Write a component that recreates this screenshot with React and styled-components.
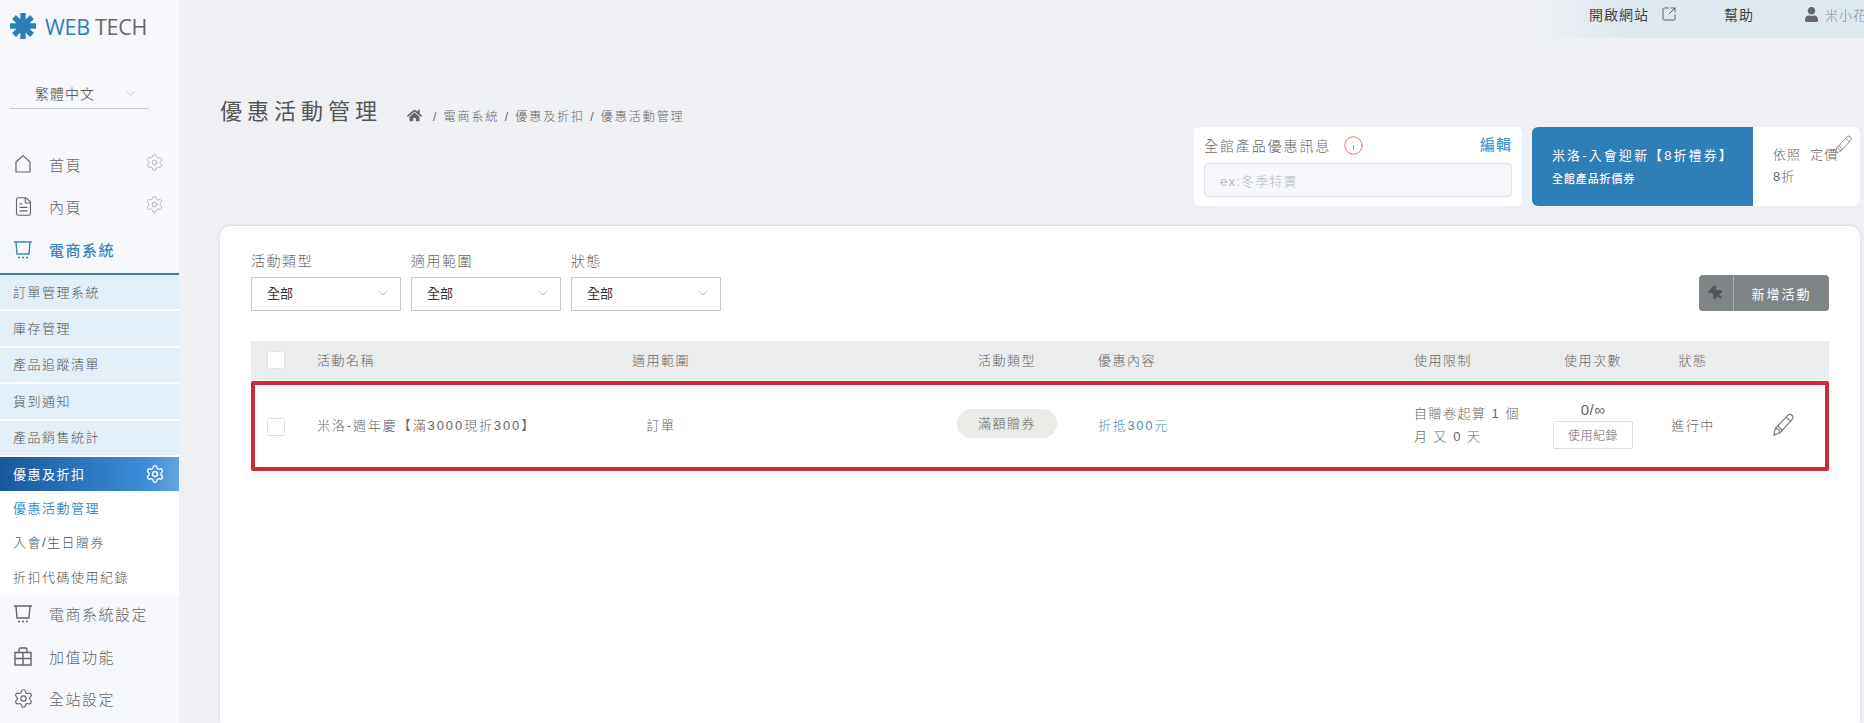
import React from "react";
import styled, { createGlobalStyle } from "styled-components";
import { ChevronDown, FileText, Info, Settings, SquareArrowOutUpRight } from "lucide-react";
import { FaHome, FaThumbtack, FaUser } from "react-icons/fa";

const FONT = `"Liberation Sans", "Noto Sans CJK TC", sans-serif`;

const GlobalStyle = createGlobalStyle`
  html, body {
    margin: 0;
    height: 100%;
    overflow: hidden;
    background: #eef0f4;
    font-family: ${FONT};
    font-weight: 300;
    color: #555;
  }
  * {
    box-sizing: border-box;
  }
`;

function LogoMark() {
  return (
    <svg width="26" height="26" viewBox="0 0 26 26" stroke="#2e7eb8" strokeWidth="5.4">
      <path d="M13 0v26M0 13h26M4 4l18 18M22 4 4 22" />
      <circle cx="13" cy="13" r="5" fill="#2e7eb8" stroke="none" />
    </svg>
  );
}

function HouseIcon() {
  return (
    <svg width="20" height="20" viewBox="0 0 20 20" fill="none" stroke="currentColor" strokeWidth="1.2">
      <path d="M3 8 10 1.5 17 8v10H3z" />
    </svg>
  );
}

function CartIcon() {
  return (
    <svg width="20" height="20" viewBox="0 0 20 20" fill="none" stroke="currentColor" strokeWidth="1.4">
      <path d="M1 2h18M3 2l1 12h12l1-12" />
      <path d="M5 17.5h2M9 17.5h2M13 17.5h2" />
    </svg>
  );
}

function GiftIcon() {
  return (
    <svg width="20" height="20" viewBox="0 0 20 20" fill="none" stroke="currentColor" strokeWidth="1.4">
      <path d="M2 6.5h16v12.5H2zM2 12.5h16M10 6.5v12.500" />
      <path d="M6 6.5V3.500Q6 2 7.500 2h5Q14 2 14 3.500v3" />
    </svg>
  );
}

function PencilIcon({ size }) {
  return (
    <svg width={size} height={size} viewBox="0 0 24 24" fill="none" stroke="currentColor" strokeWidth="1.2">
      <path d="M2 23l1.500-7L16.500 2.500a3 3 0 0 1 4.500 4.200L8.500 20.500z" />
      <path d="M3.500 16c2 0 4.500 2 5 4.500M6 13.500l5 5M15 4.500l5 4.500" />
    </svg>
  );
}

const subItems = ["訂單管理系統", "庫存管理", "產品追蹤清單", "貨到通知", "產品銷售統計"];
const innerItems = ["優惠活動管理", "入會/生日贈券", "折扣代碼使用紀錄"];
const filters = ["活動類型", "適用範圍", "狀態"];

export default function App() {
  return (
    <Page>
      <GlobalStyle />
      <Sidebar>
        <Logo>
          <LogoMark />
          <LogoText>
            WEB <LogoGrey>TECH</LogoGrey>
          </LogoText>
        </Logo>
        <LangSelect>
          繁體中文
          <LangArrow>
            <ChevronDown size={15} strokeWidth={1} />
          </LangArrow>
        </LangSelect>
        <NavItem $height={42}>
          <NavIcon><HouseIcon /></NavIcon>
          首頁
          <NavGear><Settings size={19} strokeWidth={1.1} /></NavGear>
        </NavItem>
        <NavItem $height={42}>
          <NavIcon><FileText size={21} strokeWidth={1.3} /></NavIcon>
          內頁
          <NavGear><Settings size={19} strokeWidth={1.1} /></NavGear>
        </NavItem>
        <NavItem $height={47} $current>
          <NavIcon><CartIcon /></NavIcon>
          電商系統
        </NavItem>
        <SubList>
          {subItems.map((item) => (
            <SubItem key={item}>{item}</SubItem>
          ))}
          <ActiveItem>
            優惠及折扣
            <Settings size={20} strokeWidth={1.6} />
          </ActiveItem>
        </SubList>
        <InnerList>
          {innerItems.map((item, index) => (
            <InnerItem key={item} $selected={index === 0}>{item}</InnerItem>
          ))}
        </InnerList>
        <BottomItem $height={42}>
          <NavIcon><CartIcon /></NavIcon>
          電商系統設定
        </BottomItem>
        <BottomItem $height={43}>
          <NavIcon><GiftIcon /></NavIcon>
          加值功能
        </BottomItem>
        <BottomItem $height={42}>
          <NavIcon><Settings size={21} strokeWidth={1.3} /></NavIcon>
          全站設定
        </BottomItem>
      </Sidebar>

      <Main>
        <TopBar>
          <TopLink>
            開啟網站
            <SquareArrowOutUpRight size={16} strokeWidth={1.2} />
          </TopLink>
          <TopLink>幫助</TopLink>
          <UserName>
            <FaUser size={15} color="#666" />
            米小花
          </UserName>
        </TopBar>

        <Header>
          <TitleBlock>
            <Title>優惠活動管理</Title>
            <Breadcrumb>
              <FaHome size={15} color="#666" />
              <span>/ 電商系統 / 優惠及折扣 / 優惠活動管理</span>
            </Breadcrumb>
          </TitleBlock>
          <CardRow>
            <InfoCard>
              <InfoHead>
                全館產品優惠訊息
                <InfoMark><Info size={21} strokeWidth={1} /></InfoMark>
                <EditLink>編輯</EditLink>
              </InfoHead>
              <FakeInput>ex:冬季特賣</FakeInput>
            </InfoCard>
            <CouponCard>
              <CouponBlue>
                <CouponTitle>米洛-入會迎新【8折禮券】</CouponTitle>
                <CouponSub>全館產品折價券</CouponSub>
              </CouponBlue>
              <CouponRest>
                <div>依照&nbsp; 定價</div>
                <div>8折</div>
                <CouponPencil><PencilIcon size={19} /></CouponPencil>
              </CouponRest>
            </CouponCard>
          </CardRow>
        </Header>

        <Panel>
          <Toolbar>
            <Filters>
              {filters.map((label) => (
                <Filter key={label}>
                  <FilterLabel>{label}</FilterLabel>
                  <Select>
                    全部
                    <ChevronDown size={16} strokeWidth={1} color="#999" />
                  </Select>
                </Filter>
              ))}
            </Filters>
            <AddButton>
              <AddIcon><PinIcon size={15} color="#555" /></AddIcon>
              <AddLabel>新增活動</AddLabel>
            </AddButton>
          </Toolbar>

          <HeadRow>
            <CheckCell><Checkbox /></CheckCell>
            <Cell>活動名稱</Cell>
            <Cell $align="center">適用範圍</Cell>
            <TypeCell>活動類型</TypeCell>
            <Cell>優惠內容</Cell>
            <Cell>使用限制</Cell>
            <Cell $align="center">使用次數</Cell>
            <Cell $align="center">狀態</Cell>
            <Cell />
          </HeadRow>
          <BodyRow>
            <CheckCell><RowCheckbox /></CheckCell>
            <NameCell>米洛-週年慶【滿3000現折300】</NameCell>
            <Cell $align="center">訂單</Cell>
            <TypeCell><Badge>滿額贈券</Badge></TypeCell>
            <Cell><BlueText>折抵300元</BlueText></Cell>
            <LimitCell>自贈卷起算 1 個月 又 0 天</LimitCell>
            <UsageCell>
              <span>0/∞</span>
              <LogButton>使用紀錄</LogButton>
            </UsageCell>
            <Cell $align="center">進行中</Cell>
            <EditCell><PencilIcon size={23} /></EditCell>
          </BodyRow>
          <RowLine />
        </Panel>
      </Main>
    </Page>
  );
}

const Page = styled.div`
  display: flex;
  width: 1864px;
  height: 723px;
  overflow: hidden;
`;

const Sidebar = styled.aside`
  flex: 0 0 179px;
  background: #f6f8fb;
  display: flex;
  flex-direction: column;
`;

const Logo = styled.div`
  display: flex;
  align-items: center;
  gap: 9px;
  height: 52px;
  padding-left: 10px;
`;

const LogoText = styled.div`
  font-family: "Open Sans", sans-serif;
  font-size: 21.5px;
  font-weight: 400;
  color: #2e7eb8;
  letter-spacing: -0.3px;
`;

const LogoGrey = styled.span`
  color: #666;
`;

const LangSelect = styled.div`
  position: relative;
  margin: 20px 30px 35px 10px;
  height: 37px;
  border-bottom: 1px solid #c9ccd2;
  font-size: 14px;
  letter-spacing: 1px;
  color: #444;
  padding: 11px 0 0 25px;
`;

const LangArrow = styled.span`
  position: absolute;
  right: 11px;
  top: 14px;
  color: #aaa;
`;

const NavItem = styled.div`
  position: relative;
  display: flex;
  align-items: center;
  height: ${(p) => p.$height}px;
  padding: 0 0 2px 13px;
  font-size: 15px;
  letter-spacing: 1.5px;
  color: ${(p) => (p.$current ? "#3f86b5" : "#666")};
  font-weight: ${(p) => (p.$current ? 500 : 300)};
  border-bottom: ${(p) => (p.$current ? "2px solid #4a7f99" : "none")};
`;

const BottomItem = styled(NavItem)`
  padding-bottom: 4px;
`;

const NavIcon = styled.span`
  display: flex;
  width: 36px;
`;

const NavGear = styled.span`
  position: absolute;
  right: 15px;
  top: 9px;
  color: #aaa;
`;

const SubList = styled.div`
  display: flex;
  flex-direction: column;
`;

const SubItem = styled.div`
  display: flex;
  align-items: center;
  height: 36.4px;
  background: #e2eff8;
  border-bottom: 2px solid #fff;
  padding: 0 0 2px 13px;
  font-size: 13px;
  letter-spacing: 1.5px;
  color: #555;
`;

const ActiveItem = styled.div`
  display: flex;
  align-items: center;
  justify-content: space-between;
  height: 34px;
  padding: 0 14px 0 13px;
  background: linear-gradient(90deg, #17589b, #3a8cd8 80%, #62a5e0);
  font-size: 13px;
  font-weight: 400;
  letter-spacing: 1.5px;
  color: #fff;
`;

const InnerList = styled.div`
  background: #fff;
  height: 104px;
  display: flex;
  flex-direction: column;
`;

const InnerItem = styled.div`
  display: flex;
  align-items: center;
  height: 34.5px;
  padding: 0 0 2px 13px;
  font-size: 13px;
  font-weight: ${(p) => (p.$selected ? 400 : 300)};
  letter-spacing: 1.5px;
  color: ${(p) => (p.$selected ? "#3f93c9" : "#555")};
`;

const Main = styled.main`
  flex: 1;
  min-width: 0;
  display: flex;
  flex-direction: column;
`;

const TopBar = styled.div`
  align-self: flex-end;
  display: flex;
  width: 330px;
  height: 38px;
  padding: 0 0 10px 55px;
  align-items: center;
  white-space: nowrap;
  overflow: hidden;
  background: linear-gradient(90deg, #eef0f4, #dde8ef 30%);
  font-size: 14px;
  font-weight: 400;
  letter-spacing: 1px;
  color: #444;
`;

const TopLink = styled.span`
  display: flex;
  align-items: center;
  gap: 12px;
  margin-right: 47px;
`;

const UserName = styled.span`
  display: flex;
  align-items: center;
  gap: 6px;
  margin-left: 3px;
  font-size: 13px;
  font-weight: 300;
  color: #888;
`;

const Header = styled.header`
  display: flex;
  justify-content: space-between;
  height: 188px;
  padding: 0 4px 0 41px;
`;

const TitleBlock = styled.div`
  display: flex;
  align-items: center;
  gap: 25px;
  height: 30px;
  margin-top: 56px;
`;

const Title = styled.h1`
  margin: 0;
  font-size: 22px;
  font-weight: 400;
  letter-spacing: 5px;
  color: #555;
`;

const Breadcrumb = styled.div`
  display: flex;
  align-items: center;
  gap: 11px;
  margin-top: 12px;
  font-size: 12px;
  letter-spacing: 1.95px;
  color: #666;
`;

const CardRow = styled.div`
  display: flex;
  gap: 10px;
  height: 79px;
  margin-top: 89px;
`;

const InfoCard = styled.div`
  width: 328px;
  background: #fff;
  border-radius: 6px;
  padding: 4px 10px;
`;

const InfoHead = styled.div`
  display: flex;
  align-items: center;
  height: 28px;
  margin-bottom: 4px;
  font-size: 14px;
  letter-spacing: 1.9px;
  color: #666;
`;

const InfoMark = styled.span`
  display: flex;
  margin-left: 12px;
  color: #d9635f;
`;

const EditLink = styled.span`
  margin-left: auto;
  margin-bottom: 3px;
  font-size: 15px;
  font-weight: 500;
  color: #4b9ad0;
  letter-spacing: 1px;
`;

const FakeInput = styled.div`
  height: 34px;
  background: #f5f7fb;
  border: 1px solid #dfe3ea;
  border-radius: 4px;
  padding: 7px 15px;
  font-size: 13px;
  letter-spacing: 1.2px;
  color: #bbb;
`;

const CouponCard = styled.div`
  display: flex;
  width: 328px;
  border-radius: 6px;
  overflow: hidden;
  background: #fff;
`;

const CouponBlue = styled.div`
  flex: 0 0 221px;
  background: #2e7eb8;
  color: #fff;
  padding: 18px 0 0 20px;
`;

const CouponTitle = styled.div`
  font-size: 13px;
  font-weight: 400;
  letter-spacing: 2.1px;
  white-space: nowrap;
`;

const CouponSub = styled.div`
  margin-top: 6px;
  font-size: 11px;
  font-weight: 500;
  letter-spacing: 0.9px;
`;

const CouponRest = styled.div`
  position: relative;
  flex: 1;
  padding: 17px 0 0 20px;
  font-size: 13px;
  line-height: 22px;
  letter-spacing: 1px;
  white-space: nowrap;
  color: #666;
`;

const CouponPencil = styled.span`
  position: absolute;
  right: 7px;
  top: 8px;
  color: #888;
`;

const Panel = styled.section`
  flex: 1;
  margin: 0 4px 0 41px;
  padding: 0 31px;
  background: #fff;
  border-radius: 10px 10px 0 0;
  box-shadow: 0 -1px 3px rgba(0, 0, 0, 0.12);
`;

const Toolbar = styled.div`
  display: flex;
  justify-content: space-between;
  align-items: flex-end;
  height: 85px;
`;

const Filters = styled.div`
  display: flex;
  gap: 10px;
`;

const Filter = styled.div`
  display: flex;
  flex-direction: column;
  gap: 6px;
`;

const FilterLabel = styled.label`
  font-size: 14px;
  letter-spacing: 1.5px;
  color: #666;
  line-height: 20px;
`;

const Select = styled.div`
  display: flex;
  align-items: center;
  justify-content: space-between;
  width: 150px;
  height: 34px;
  border: 1px solid #c5c8cc;
  padding: 0 9px 3px 15px;
  font-size: 13px;
  font-weight: 400;
  color: #333;
`;

const AddButton = styled.button`
  display: flex;
  align-items: center;
  width: 130px;
  height: 36px;
  padding: 0;
  border: none;
  border-radius: 4px;
  background: #7f8487;
  color: #fff;
  font-family: inherit;
  font-size: 13px;
  font-weight: 400;
  letter-spacing: 2px;
`;

const AddIcon = styled.span`
  display: flex;
  align-items: center;
  justify-content: center;
  width: 35px;
  height: 100%;
  border-right: 1px solid #a9adaf;
`;

const PinIcon = styled(FaThumbtack)`
  transform: rotate(-45deg);
`;

const AddLabel = styled.span`
  flex: 1;
  text-align: center;
`;

const COLUMNS = "66px 244px 200px 337px 316px 116px 126px 74px 1fr";

const HeadRow = styled.div`
  display: grid;
  grid-template-columns: ${COLUMNS};
  align-items: center;
  height: 39px;
  margin-top: 30px;
  padding-bottom: 2px;
  background: #ebecee;
  font-size: 13px;
  letter-spacing: 1.5px;
  color: #666;
`;

const BodyRow = styled.div`
  display: grid;
  grid-template-columns: ${COLUMNS};
  align-items: center;
  height: 90px;
  margin-top: 1px;
  padding-bottom: 3px;
  box-shadow: inset 0 0 0 4px #c62f38;
  border-radius: 2px;
  font-size: 13px;
  letter-spacing: 1.5px;
  color: #666;
`;

const RowLine = styled.div`
  height: 1px;
  margin-top: 2px;
  background: #eee;
`;

const Cell = styled.div`
  display: flex;
  justify-content: ${(p) => p.$align || "flex-start"};
  align-items: center;
  min-width: 0;
  white-space: nowrap;
`;

const CheckCell = styled(Cell)`
  padding-left: 16px;
`;

const NameCell = styled(Cell)`
  letter-spacing: 1.9px;
`;

const TypeCell = styled(Cell)`
  justify-content: center;
  padding-left: 155px;
`;

const LimitCell = styled.div`
  line-height: 23px;
`;

const UsageCell = styled.div`
  display: flex;
  flex-direction: column;
  align-items: center;
  gap: 3px;
  letter-spacing: 0.5px;
  font-size: 15px;
`;

const EditCell = styled(Cell)`
  justify-content: center;
  color: #777;
  padding-left: 8px;
`;

const Checkbox = styled.span`
  display: block;
  width: 18px;
  height: 18px;
  background: #fff;
  border: 1px solid #e4e5e7;
  border-radius: 2px;
`;

const RowCheckbox = styled(Checkbox)`
  margin-top: 5px;
  border-color: #dcdde0;
`;

const Badge = styled.span`
  display: flex;
  align-items: center;
  justify-content: center;
  width: 100px;
  height: 29px;
  margin-top: -2px;
  padding-bottom: 2px;
  border-radius: 15px;
  background: #ebebe6;
`;

const BlueText = styled.span`
  color: #4a90b8;
  letter-spacing: 1.7px;
`;

const LogButton = styled.button`
  width: 80px;
  height: 28px;
  padding: 0;
  background: #fff;
  border: 1px solid #ddd;
  border-radius: 2px;
  font-family: inherit;
  font-size: 12px;
  font-weight: 300;
  letter-spacing: 0.5px;
  color: #666;
`;
